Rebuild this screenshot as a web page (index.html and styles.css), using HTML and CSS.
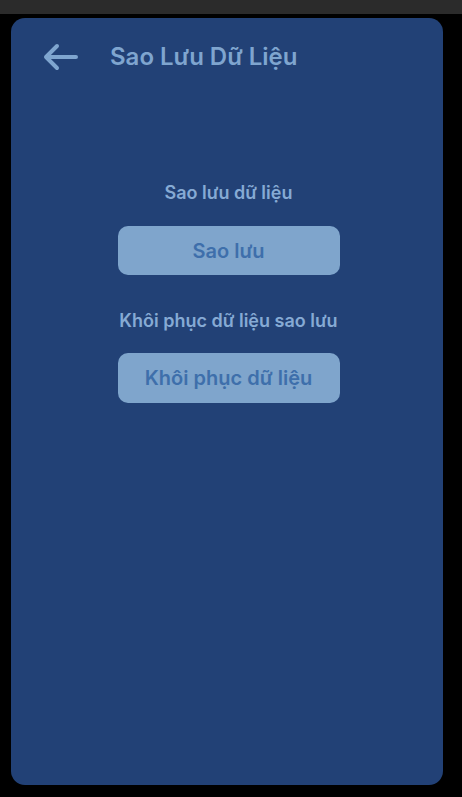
FILE: index.html
```html
<!DOCTYPE html>
<html lang="vi">
<head>
<meta charset="utf-8">
<link rel="stylesheet" href="styles.css">
</head>
<body>
<div class="topbar"></div>
<main class="card">
  <header class="header">
    <svg class="back" width="36" height="28" viewBox="0 0 36 28" fill="none" stroke="#7fa5cf" stroke-width="4" stroke-linecap="round" stroke-linejoin="round">
      <path d="M34 14H4M15 3L4 14l11 11"/>
    </svg>
    <h1 class="title">Sao Lưu Dữ Liệu</h1>
  </header>
  <section class="content">
    <p class="label">Sao lưu dữ liệu</p>
    <button class="btn">Sao lưu</button>
    <p class="label label2">Khôi phục dữ liệu sao lưu</p>
    <button class="btn btn2">Khôi phục dữ liệu</button>
  </section>
</main>
</body>
</html>
```
FILE: styles.css
```css
* { box-sizing: border-box; }
html, body { margin: 0; padding: 0; }
body {
  background: #000;
  width: 462px;
  height: 797px;
  overflow: hidden;
  font-family: Inter, "Noto Sans", sans-serif;
}
.topbar {
  height: 14px;
  background: #2b2b2b;
}
.card {
  margin: 4px 19px 0 11px;
  height: 767px;
  background: #224176;
  border-radius: 14px;
  display: flex;
  flex-direction: column;
}
.header {
  display: flex;
  align-items: center;
  padding: 0 0 0 31px;
  margin-top: 25px;
  height: 28px;
}
.back { flex: none; }
.title {
  margin: 0 0 0 32px;
  font-size: 24px;
  line-height: 28px;
  font-weight: 600;
  color: #7fa5cf;
}
.content {
  display: flex;
  flex-direction: column;
  align-items: center;
  padding: 110px 0 0 3px;
}
.label {
  margin: 0;
  font-size: 18px;
  font-weight: 600;
  color: #86aad4;
  line-height: 24px;
}
.label2 { margin-top: 34px; }
.btn {
  margin-top: 21px;
  width: 222px;
  height: 49px;
  border: none;
  border-radius: 10px;
  background: #7fa5cc;
  color: #3e6fab;
  font-family: Inter, "Noto Sans", sans-serif;
  font-size: 20px;
  font-weight: 600;
}
.btn2 { margin-top: 20px; height: 50px; }
```
